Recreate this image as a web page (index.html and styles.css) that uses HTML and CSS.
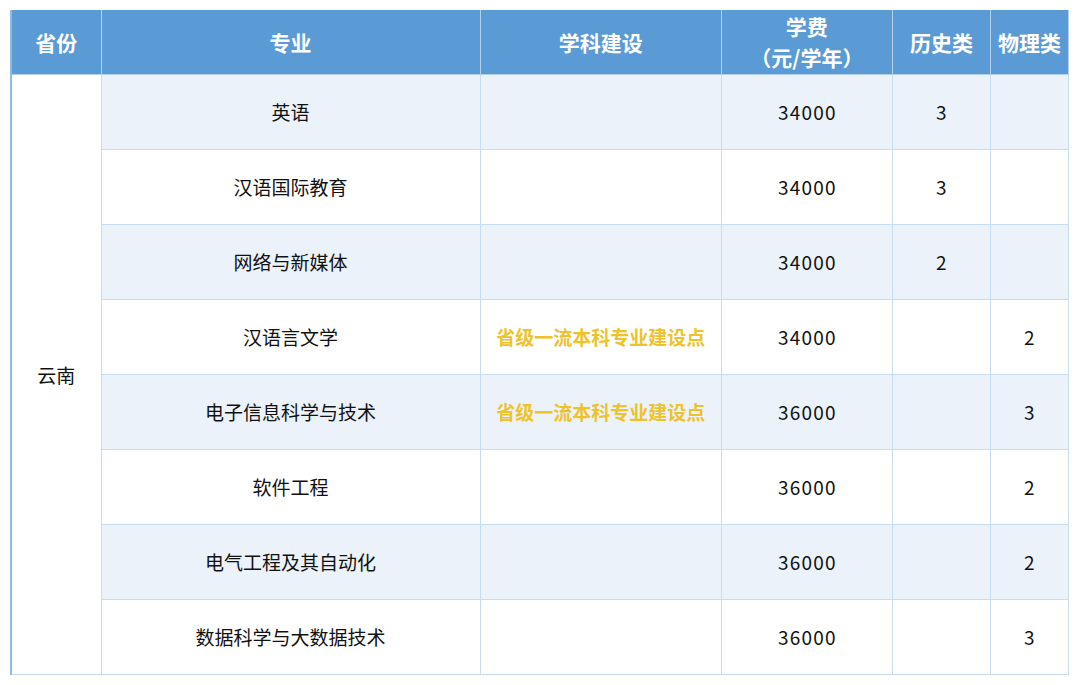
FILE: index.html
```html
<!DOCTYPE html>
<html lang="zh">
<head>
<meta charset="utf-8">
<link rel="stylesheet" href="styles.css">
</head>
<body>
<table class="fees">
  <colgroup>
    <col class="c-prov"><col class="c-major"><col class="c-build"><col class="c-fee"><col class="c-hist"><col class="c-phys">
  </colgroup>
  <thead>
    <tr>
      <th>省份</th>
      <th>专业</th>
      <th>学科建设</th>
      <th>学费<br>（元/学年）</th>
      <th>历史类</th>
      <th>物理类</th>
    </tr>
  </thead>
  <tbody>
    <tr class="alt"><td rowspan="8" class="prov">云南</td><td>英语</td><td></td><td class="num">34000</td><td class="num">3</td><td></td></tr>
    <tr><td>汉语国际教育</td><td></td><td class="num">34000</td><td class="num">3</td><td></td></tr>
    <tr class="alt"><td>网络与新媒体</td><td></td><td class="num">34000</td><td class="num">2</td><td></td></tr>
    <tr><td>汉语言文学</td><td class="hl">省级一流本科专业建设点</td><td class="num">34000</td><td></td><td class="num">2</td></tr>
    <tr class="alt"><td>电子信息科学与技术</td><td class="hl">省级一流本科专业建设点</td><td class="num">36000</td><td></td><td class="num">3</td></tr>
    <tr><td>软件工程</td><td></td><td class="num">36000</td><td></td><td class="num">2</td></tr>
    <tr class="alt"><td>电气工程及其自动化</td><td></td><td class="num">36000</td><td></td><td class="num">2</td></tr>
    <tr><td>数据科学与大数据技术</td><td></td><td class="num">36000</td><td></td><td class="num">3</td></tr>
  </tbody>
</table>
</body>
</html>
```
FILE: styles.css
```css
html, body {
  margin: 0;
  padding: 0;
  background: #ffffff;
}
body {
  padding: 10px;
  font-family: "Noto Sans CJK SC", "Noto Sans", sans-serif;
  color: #111111;
}
.fees {
  width: 1059px;
  table-layout: fixed;
  border-collapse: collapse;
  border-left: 2px solid #8fbbe6;
}
.c-prov { width: 90px; }
.c-major { width: 379px; }
.c-build { width: 241px; }
.c-fee { width: 171px; }
.c-hist { width: 98px; }
.c-phys { width: 78px; }
.fees th {
  background: #5b9bd5;
  color: #ffffff;
  font-size: 21px;
  font-weight: 700;
  line-height: 31px;
  height: 64px;
  padding: 0;
  text-align: center;
  vertical-align: middle;
  border: 1px solid #b3d0ec;
  border-top: none;
}
.fees td {
  height: 74px;
  padding: 0;
  text-align: center;
  vertical-align: middle;
  font-size: 19px;
  line-height: 24px;
  border: 1px solid #c6dcf1;
  background: #ffffff;
}
.fees tr.alt td {
  background: #ebf2fa;
}
.fees tr.alt td.prov {
  background: #ffffff;
}
.fees td.num {
  letter-spacing: 1.2px;
  padding-left: 1px;
}
.fees td.hl {
  color: #eec22a;
  font-weight: 700;
}
```
